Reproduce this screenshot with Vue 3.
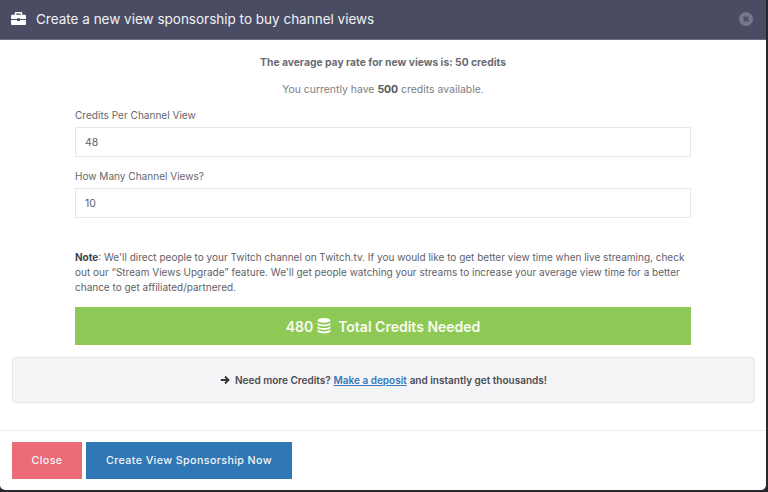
<script setup>
const rate = 50
const credits = 500
const perView = 48
const views = 10
</script>

<template>
  <div class="screen">
    <div class="modal">
      <header class="head">
        <svg class="case" viewBox="0 0 16 14" width="15" height="13">
          <path fill="#fff" d="M5 0h6a1 1 0 0 1 1 1v2h3a1 1 0 0 1 1 1v3.500H9.600V6.600H6.400v.9H0V4a1 1 0 0 1 1-1h3V1a1 1 0 0 1 1-1zm.5 1.500V3h5V1.500z"/>
          <path fill="#fff" d="M0 8.500h6.400v1.100h3.200V8.500H16V13a1 1 0 0 1-1 1H1a1 1 0 0 1-1-1z"/>
        </svg>
        <h1>Create a new view sponsorship to buy channel views</h1>
        <span class="x"><svg viewBox="0 0 14 14" width="14" height="14"><circle cx="7" cy="7" r="7" fill="#74768b"/><path d="M4.600 4.600l4.800 4.800M9.400 4.600l-4.800 4.800" stroke="#4a4c63" stroke-width="2"/></svg></span>
      </header>

      <main class="body">
        <p class="rate">The average pay rate for new views is: {{ rate }} credits</p>
        <p class="have">You currently have <b>{{ credits }}</b> credits available.</p>

        <section class="form">
          <label class="lab">Credits Per Channel View</label>
          <div class="input">{{ perView }}</div>
          <label class="lab">How Many Channel Views?</label>
          <div class="input">{{ views }}</div>

          <p class="note"><b>Note</b>: We'll direct people to your Twitch channel on Twitch.tv. If you would like to get better view time when live streaming, check out our “Stream Views Upgrade” feature. We'll get people watching your streams to increase your average view time for a better chance to get affiliated/partnered.</p>

          <div class="total">
            <span>{{ perView * views }}</span>
            <svg viewBox="0 0 14 16" width="14" height="16">
              <g fill="#fff">
                <ellipse cx="7" cy="2.400" rx="6.500" ry="2.400"/>
                <path d="M.5 4.800c1.500 1.300 3.700 1.800 6.500 1.800s5-.5 6.500-1.800v1.500C13.500 7.600 10.500 8.300 7 8.300S.5 7.600.5 6.300z"/>
                <path d="M.5 8.200c1.500 1.300 3.700 1.800 6.500 1.800s5-.5 6.500-1.800v1.500c0 1.300-3 2-6.500 2s-6.500-.7-6.500-2z"/>
                <path d="M.5 11.600c1.500 1.300 3.700 1.800 6.500 1.800s5-.5 6.500-1.800v1.500c0 1.300-3 2.400-6.500 2.400S.5 14.400.5 13.100z"/>
              </g>
            </svg>
            <span class="tt">Total Credits Needed</span>
          </div>
        </section>

        <div class="well">
          <svg viewBox="0 0 12 12" width="10" height="10"><path d="M1 6h9M6 1.800L10.200 6 6 10.200" fill="none" stroke="#33353c" stroke-width="2.200"/></svg>
          <span class="msg"><b>Need more Credits?</b> <a href="#" @click.prevent>Make a deposit</a> <b>and instantly get thousands!</b></span>
        </div>
      </main>

      <footer class="foot">
        <button class="btn close">Close</button>
        <button class="btn go">Create View Sponsorship Now</button>
      </footer>
    </div>
  </div>
</template>

<style>
html, body { margin: 0; background: #26272f; }
</style>

<style scoped>
.screen {
  width: 768px;
  height: 492px;
  overflow: hidden;
  font-family: Inter, "Liberation Sans", sans-serif;
  color: #5c5e66;
}
.modal {
  width: 766px;
  height: 490px;
  background: #fff;
  border-radius: 0 0 5px 5px;
  display: flex;
  flex-direction: column;
  overflow: hidden;
}
.head {
  flex: 0 0 40px;
  box-sizing: border-box;
  background: #4a4c63;
  border-bottom: 1px solid #6d6e80;
  display: flex;
  align-items: center;
  padding: 0 14px 2px 11px;
  color: #f1f1f4;
}
.case { flex: none; }
h1 {
  margin: 0 0 0 10px;
  font-size: 13.500px;
  font-weight: 400;
  flex: 1;
  white-space: nowrap;
}
.x { display: flex; margin-right: -1px; }
.body { flex: 1; display: flex; flex-direction: column; }
p { margin: 0; }
.rate {
  margin-top: 15px;
  text-align: center;
  font-size: 10.300px;
  line-height: 14px;
  font-weight: 700;
  color: #6a6c72;
}
.have {
  margin-top: 14px;
  text-align: center;
  font-size: 10.450px;
  line-height: 14px;
  color: #7e8086;
}
.have b { color: #55575d; }
.form {
  margin: 0 75px;
  display: flex;
  flex-direction: column;
}
.lab {
  margin-top: 12px;
  font-size: 10.050px;
  line-height: 14px;
  color: #66686e;
}
.have + .form .lab:first-child { margin-top: 11px; }
.input {
  margin-top: 5px;
  height: 30px;
  box-sizing: border-box;
  border: 1px solid #e8e8eb;
  padding-left: 9px;
  display: flex;
  align-items: center;
  font-size: 10.500px;
  color: #5f6167;
}
.note {
  margin-top: 32px;
  font-size: 10px;
  line-height: 15px;
  color: #5f6167;
}
.note b { color: #44464c; }
.total {
  margin-top: 12px;
  height: 38px;
  background: #8fc955;
  color: #f8fbf2;
  font-size: 14px;
  font-weight: 600;
  display: flex;
  align-items: center;
  justify-content: center;
  gap: 4px;
}
.tt { margin-left: 3px; }
.well {
  margin: 12px 11px 0 12px;
  height: 46px;
  box-sizing: border-box;
  background: #f5f4f7;
  border: 1px solid #e8e8ea;
  border-radius: 3px;
  display: flex;
  align-items: center;
  justify-content: center;
  gap: 5px;
  font-size: 10px;
  color: #4a4c52;
}
.msg b { font-weight: 600; }
.msg a { color: #337ab7; font-weight: 600; text-decoration: underline; }
.foot {
  flex: 0 0 60px;
  box-sizing: border-box;
  border-top: 1px solid #ececee;
  padding: 11px 12px 0;
  display: flex;
  align-items: flex-start;
  gap: 4px;
}
.btn {
  height: 37px;
  border: 0;
  border-radius: 0;
  padding: 0;
  font-family: inherit;
  font-size: 10.700px;
  font-weight: 500;
  color: #f3f5f8;
  letter-spacing: 0.4px;
}
.close { width: 70px; background: #ec6b78; }
.go { width: 206px; background: #2f78b5; }
</style>
